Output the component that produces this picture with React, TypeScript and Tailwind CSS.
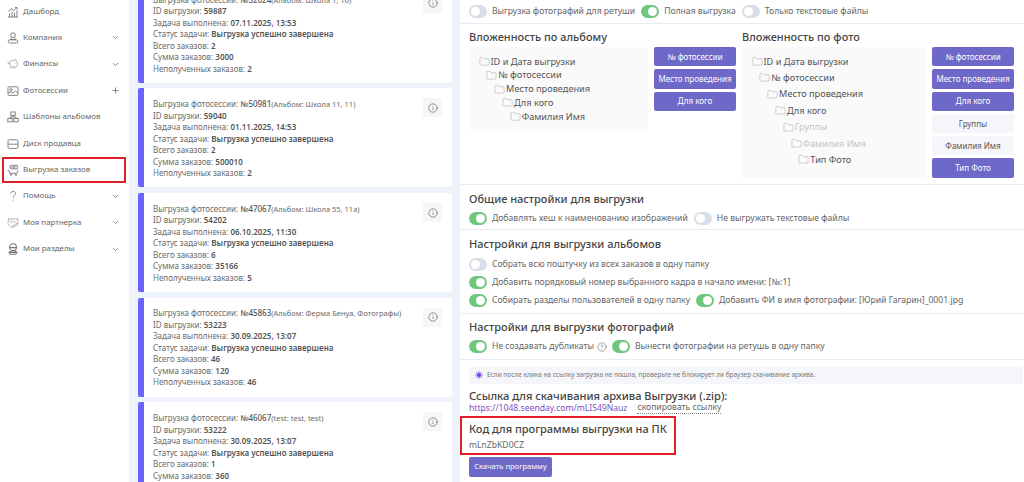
import React from "react";
import { ChevronDown, Plus, Info, Folder, CircleHelp, PiggyBank, Handshake } from "lucide-react";

const stroke = { fill: "none", stroke: "currentColor", strokeWidth: 0.9 };

const DashIcon = () => (
  <svg width="12" height="12" viewBox="0 0 12 12" {...stroke}>
    <path d="M1 11h10M2.5 11V7.5M5 11V5.5M7.5 11V6.5M10 11V4.5M1.5 5.5 4 2.5l2.5 2L10 1.5M8 1.5h2v2" />
  </svg>
);
const CompanyIcon = () => (
  <svg width="12" height="12" viewBox="0 0 12 12" {...stroke}>
    <circle cx="6" cy="3.2" r="2.4" />
    <path d="M4.6 5.5 3.6 7.6h4.8L7.4 5.5" />
    <rect x="1.2" y="7.8" width="9.6" height="3.2" rx="1.6" />
  </svg>
);
const PhotoIcon = () => (
  <svg width="12" height="12" viewBox="0 0 12 12" {...stroke}>
    <rect x="1" y="1.8" width="10" height="8.6" rx="1" />
    <circle cx="4" cy="4.8" r="1.2" />
    <path d="M1 8.2 4 6.8l2 1.4 2.4-2.2L11 8" />
  </svg>
);
const TemplateIcon = () => (
  <svg width="12" height="12" viewBox="0 0 12 12" {...stroke}>
    <rect x="3.8" y="1" width="4.4" height="3.4" />
    <rect x="0.8" y="7.4" width="4.4" height="3.4" />
    <rect x="6.8" y="7.4" width="4.4" height="3.4" />
    <path d="M6 4.4V6M3 7.4V6h6v1.4" />
  </svg>
);
const DiskIcon = () => (
  <svg width="12" height="12" viewBox="0 0 12 12" {...stroke}>
    <rect x="1" y="1.8" width="10" height="8.6" rx="1.4" />
    <path d="M1 6.2h10" />
  </svg>
);
const OrdersIcon = () => (
  <svg width="12" height="12" viewBox="0 0 12 12" {...stroke}>
    <path d="M0.5 6.5h1.4l1 2.8h7l1-2.8" />
    <path d="M3 1v4M4.8 1.2h2v3.8h-2zM7.8 1.2h2.4v3.8H7.8z" />
    <circle cx="4" cy="10.7" r="0.7" />
    <circle cx="9" cy="10.7" r="0.7" />
  </svg>
);
const HelpIcon = () => (
  <svg width="12" height="12" viewBox="0 0 12 12" {...stroke}>
    <path d="M3.6 3.6C3.8 2.2 4.8 1.4 6.1 1.4c1.4 0 2.4 1 2.4 2.2 0 1.8-2.4 2-2.4 4.2M6.1 9.6v1" />
  </svg>
);
const PersonalIcon = () => (
  <svg width="12" height="12" viewBox="0 0 12 12" fill="none" stroke="currentColor" strokeWidth="1.1">
    <circle cx="6" cy="4.2" r="3.4" />
    <path d="M2.6 4.6h6.8M4 8l-1.6 1.2h7.2L8 8" />
    <rect x="2.6" y="9.4" width="6.8" height="1.8" rx="0.9" />
  </svg>
);

const menu = [
  { label: "Дашборд", icon: <DashIcon /> },
  { label: "Компания", icon: <CompanyIcon />, arrow: true },
  { label: "Финансы", icon: <PiggyBank size={12} strokeWidth={1} />, arrow: true },
  { label: "Фотосессии", icon: <PhotoIcon />, plus: true },
  { label: "Шаблоны альбомов", icon: <TemplateIcon /> },
  { label: "Диск продавца", icon: <DiskIcon /> },
  { label: "Выгрузка заказов", icon: <OrdersIcon />, active: true },
  { label: "Помощь", icon: <HelpIcon />, arrow: true },
  { label: "Моя партнерка", icon: <Handshake size={12} strokeWidth={1} />, arrow: true },
  { label: "Мои разделы", icon: <PersonalIcon />, arrow: true },
];

const cards = [
  { no: "№52024", album: "(Альбом: Школа 1, 1б)", id: "59887", date: "07.11.2025, 13:53", total: "2", sum: "3000", un: "2" },
  { no: "№50981", album: "(Альбом: Школа 11, 11)", id: "59040", date: "01.11.2025, 14:53", total: "2", sum: "500010", un: "2" },
  { no: "№47067", album: "(Альбом: Школа 55, 11а)", id: "54202", date: "06.10.2025, 11:30", total: "6", sum: "35166", un: "5" },
  { no: "№45863", album: "(Альбом: Ферма Бенуа, Фотографы)", id: "53223", date: "30.09.2025, 13:07", total: "46", sum: "120", un: "46" },
  { no: "№46067", album: "(test: test, test)", id: "53222", date: "30.09.2025, 13:07", total: "1", sum: "360", un: "1" },
];

const Toggle = ({ on }: { on?: boolean }) => (
  <span className={`inline-flex h-[13px] w-[18px] shrink-0 items-center rounded-full px-[2px] ${on ? "justify-end bg-[#6fc77f]" : "justify-start bg-[#d9dee9]"}`}>
    <span className="h-[9px] w-[9px] rounded-full bg-white" />
  </span>
);

const Opt = ({ on, children }: { on?: boolean; children: React.ReactNode }) => (
  <span className="flex items-center gap-[5px]">
    <Toggle on={on} />
    <span className="whitespace-nowrap">{children}</span>
  </span>
);

const PurpleBtn = ({ children }: { children: React.ReactNode }) => (
  <div className="flex h-[19.3px] w-[82px] items-center justify-center whitespace-nowrap rounded-[2px] bg-[#6e68c8] text-[8px] text-white">{children}</div>
);

const GrayBtn = ({ children }: { children: React.ReactNode }) => (
  <div className="flex h-[19.3px] w-[82px] items-center justify-center whitespace-nowrap rounded-[2px] bg-[#f5f6fa] text-[8px] text-[#555]">{children}</div>
);

const Tree = ({ items, gap }: { items: { t: string; dim?: boolean }[]; gap: string }) => (
  <div className={`flex flex-col text-[9.2px] ${gap}`}>
    {items.map((it, i) => (
      <div key={it.t} className={`flex h-[12px] items-center gap-[1px] ${it.dim ? "text-[#c4c4c4]" : "text-[#555]"}`}>
        <span style={{ width: i * 7.8 }} />
        <Folder size={11} strokeWidth={1} className="text-[#999]" />
        <span className="whitespace-nowrap">{it.t}</span>
      </div>
    ))}
  </div>
);

const Heading = ({ children }: { children: React.ReactNode }) => (
  <h2 className="text-[11px] font-medium leading-[15px] text-[#444]">{children}</h2>
);

const Row = ({ label, children }: { label: string; children: React.ReactNode }) => (
  <div className="h-[11.5px]">
    {label} <b className="font-semibold text-[#555]">{children}</b>
  </div>
);

export default function App() {
  return (
    <div className="flex h-[482px] w-[1024px] overflow-hidden bg-[#eef2fb] text-[#555] [font-family:'Noto_Sans',sans-serif]">
      <aside className="flex h-full w-[129px] shrink-0 flex-col bg-white">
        <div className="-mt-[1.6px]">
          {menu.map((m) => (
            <div key={m.label} className={`mx-[1.5px] flex h-[26.4px] items-center pr-[5px] text-[7.9px] text-[#666] ${m.active ? "w-[124px] border-2 border-[#e2202c] pl-[3.5px]" : "pl-[5.5px]"}`}>
              <span className="mr-[4px] flex w-[12px] text-[#777]">{m.icon}</span>
              <span className="flex-1 whitespace-nowrap">{m.label}</span>
              {m.arrow && <ChevronDown size={9} className="mr-[3px]" />}
              {m.plus && <Plus size={9} className="mr-[3px]" strokeWidth={2} />}
            </div>
          ))}
        </div>
      </aside>

      <main className="-mt-[16.3px] flex h-full w-[323px] shrink-0 flex-col gap-[5.67px] pl-[9px]">
        {cards.map((c) => (
          <div key={c.id} className="relative flex h-[99px] w-[314px] shrink-0 rounded-[2px] border-l-[6px] border-[#6b63ff] bg-white pl-[9px] pt-[9.8px] text-[8px] leading-[11.5px] text-[#6b6b6b]">
            <div className="whitespace-nowrap">
              <div className="h-[11.5px]">Выгрузка фотосессии: <b className="font-medium text-[#555]">{c.no}</b><span className="text-[7.5px]">{c.album}</span></div>
              <Row label="ID выгрузки:">{c.id}</Row>
              <Row label="Задача выполнена:">{c.date}</Row>
              <Row label="Статус задачи:">Выгрузка успешно завершена</Row>
              <Row label="Всего заказов:">{c.total}</Row>
              <Row label="Сумма заказов:">{c.sum}</Row>
              <Row label="Неполученных заказов:">{c.un}</Row>
            </div>
            <div className="absolute right-[10px] top-[10px] flex h-[19px] w-[19px] items-center justify-center rounded-[2px] bg-[#f5f6fa]">
              <Info size={10} strokeWidth={1.5} className="text-[#555]" />
            </div>
          </div>
        ))}
      </main>

      <section className="ml-[8px] flex h-full flex-1 flex-col bg-white text-[8.6px] text-[#666]">
        <div className="flex h-[23.5px] shrink-0 items-center gap-[6px] border-b border-[#e8ebf4] pl-[9px]">
          <Opt>Выгрузка фотографий для ретуши</Opt>
          <Opt on>Полная выгрузка</Opt>
          <Opt>Только текстовые файлы</Opt>
        </div>

        <div className="flex h-[161px] shrink-0 border-b border-[#e8ebf4] pl-[9px]">
          <div className="w-[273px]">
            <div className="mt-[5px] mb-[3.5px]"><Heading>Вложенность по альбому</Heading></div>
            <div className="flex gap-[6px]">
              <div className="h-[84px] w-[179px] rounded-[2px] bg-[#fafafa] pl-[8.5px] pt-[8.5px]">
                <Tree gap="gap-[1.8px]" items={[{ t: "ID и Дата выгрузки" }, { t: "№ фотосессии" }, { t: "Место проведения" }, { t: "Для кого" }, { t: "Фамилия Имя" }]} />
              </div>
              <div className="flex flex-col gap-[3px]">
                <PurpleBtn>№ фотосессии</PurpleBtn>
                <PurpleBtn>Место проведения</PurpleBtn>
                <PurpleBtn>Для кого</PurpleBtn>
              </div>
            </div>
          </div>
          <div>
            <div className="mt-[5px] mb-[3.5px]"><Heading>Вложенность по фото</Heading></div>
            <div className="flex gap-[5px]">
              <div className="h-[131px] w-[185px] rounded-[2px] bg-[#fafafa] pl-[8.5px] pt-[8.5px]">
                <Tree gap="gap-[4.4px]" items={[{ t: "ID и Дата выгрузки" }, { t: "№ фотосессии" }, { t: "Место проведения" }, { t: "Для кого" }, { t: "Группы", dim: true }, { t: "Фамилия Имя", dim: true }, { t: "Тип Фото" }]} />
              </div>
              <div className="flex flex-col gap-[3px]">
                <PurpleBtn>№ фотосессии</PurpleBtn>
                <PurpleBtn>Место проведения</PurpleBtn>
                <PurpleBtn>Для кого</PurpleBtn>
                <GrayBtn>Группы</GrayBtn>
                <GrayBtn>Фамилия Имя</GrayBtn>
                <PurpleBtn>Тип Фото</PurpleBtn>
              </div>
            </div>
          </div>
        </div>

        <div className="h-[45.5px] shrink-0 border-b border-[#e8ebf4] pl-[9px] pt-[6px]">
          <Heading>Общие настройки для выгрузки</Heading>
          <div className="mt-[6.5px] flex items-center gap-[6px]">
            <Opt on>Добавлять хеш к наименованию изображений</Opt>
            <Opt>Не выгружать текстовые файлы</Opt>
          </div>
        </div>

        <div className="h-[83.5px] shrink-0 border-b border-[#e8ebf4] pl-[9px] pt-[6px]">
          <Heading>Настройки для выгрузки альбомов</Heading>
          <div className="mt-[6.5px] flex flex-col gap-[5.4px]">
            <Opt>Собрать всю поштучку из всех заказов в одну папку</Opt>
            <Opt on>Добавить порядковый номер выбранного кадра в начало имени: [№:1]</Opt>
            <div className="flex items-center gap-[6px]">
              <Opt on>Собирать разделы пользователей в одну папку</Opt>
              <Opt on>Добавить ФИ в имя фотографии: [Юрий Гагарин]_0001.jpg</Opt>
            </div>
          </div>
        </div>

        <div className="h-[46px] shrink-0 border-b border-[#e8ebf4] pl-[9px] pt-[5.5px]">
          <Heading>Настройки для выгрузки фотографий</Heading>
          <div className="mt-[6px] flex items-center gap-[5px]">
            <span className="flex items-center gap-[3px]">
              <Opt on>Не создавать дубликаты</Opt>
              <CircleHelp size={10} strokeWidth={1.2} className="text-[#555]" />
            </span>
            <Opt on>Вынести фотографии на ретушь в одну папку</Opt>
          </div>
        </div>

        <div className="pl-[9px]">
          <div className="mt-[7px] flex h-[17px] w-[554px] items-center gap-[4px] rounded-[2px] bg-[#f5f6fa] pl-[6px] text-[6.5px] text-[#777]">
            <svg width="8" height="8" viewBox="0 0 8 8" className="text-[#6b40f0]">
              <circle cx="4" cy="4" r="2" fill="currentColor" />
              <path d="M4 0v8M0 4h8M1 1l6 6M7 1 1 7" stroke="currentColor" strokeWidth="0.7" />
            </svg>
            Если после клика на ссылку загрузка не пошла, проверьте не блокирует ли браузер скачивание архива.
          </div>
          <div className="mt-[4.5px] text-[11.1px] font-medium leading-[15px] text-[#444]">Ссылка для скачивания архива Выгрузки (.zip):</div>
          <div className="-mt-[1.5px] flex items-center gap-[10px] leading-[13px]">
            <span className="text-[#7a4fc0]">https://1048.seenday.com/mLIS49Nauz</span>
            <span className="border-b border-dotted border-[#888] text-[8.6px] leading-[11px]">скопировать ссылку</span>
          </div>
          <div className="-ml-[9px] mt-[1.5px] h-[39px] w-[216px] border-2 border-[#e2202c] pl-[7px] pt-[2.5px]">
            <Heading>Код для программы выгрузки на ПК</Heading>
            <div className="mt-[3px] leading-[12px]">mLnZbKD0CZ</div>
          </div>
          <div className="mt-[1.5px] flex h-[20px] w-[83px] items-center justify-center rounded-[2px] bg-[#6e68c8] text-[7.6px] text-white">Скачать программу</div>
        </div>
      </section>
    </div>
  );
}
